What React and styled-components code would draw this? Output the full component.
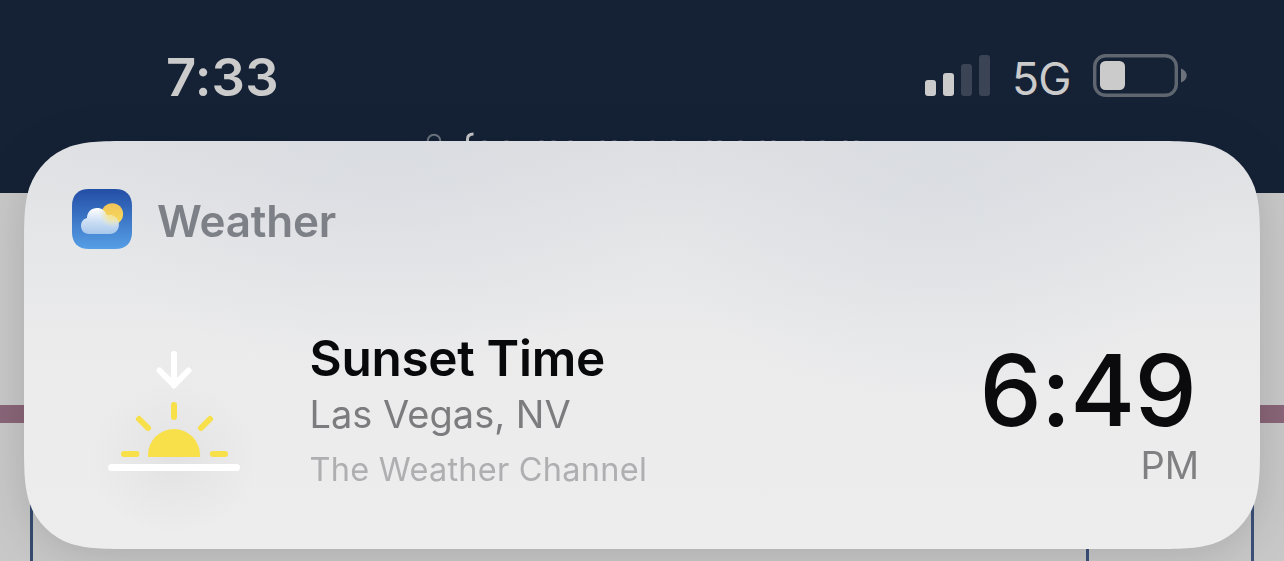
import React from 'react';
import styled, { createGlobalStyle } from "styled-components";

const GlobalStyle = createGlobalStyle`
  body {
    margin: 0;
    background: #c8c8c8;
    font-family: Inter, "Liberation Sans", sans-serif;
    overflow: hidden;
  }
`;

const CARD_SHAPE = "M111.6 0 H1124.4 C1156.5 0 1172.6 0 1189.9 5.5 C1208.8 12.3 1223.7 27.2 1230.5 46.1 C1236 63.4 1236 79.5 1236 111.6 V296.4 C1236 328.5 1236 344.6 1230.5 361.9 C1223.7 380.8 1208.8 395.7 1189.9 402.5 C1172.6 408 1156.5 408 1124.4 408 H111.6 C79.5 408 63.4 408 46.1 402.5 C27.2 395.7 12.3 380.8 5.5 361.9 C0 344.6 0 328.5 0 296.4 V111.6 C0 79.5 0 63.4 5.5 46.1 C12.3 27.2 27.2 12.3 46.1 5.5 C63.4 0 79.5 0 111.6 0 Z";

const letterTops = [484, 506, 541, 553, 570, 602, 614, 631, 652, 673, 709, 719, 740, 762, 773, 802, 822, 845, 856];

const SignalIcon = () => (
  <svg width="66" height="42" viewBox="0 0 66 42">
    <rect x="0" y="25" width="11" height="16" rx="3" fill="#cbcbcb" />
    <rect x="18" y="18" width="11" height="23" rx="3" fill="#cbcbcb" />
    <rect x="36" y="9" width="11" height="32" rx="3" fill="#3b4454" />
    <rect x="54" y="0" width="11" height="41" rx="3" fill="#3b4454" />
  </svg>
);

const BatteryIcon = () => (
  <svg width="95" height="44" viewBox="0 0 95 44">
    <rect x="1.7" y="1.7" width="81.6" height="39.6" rx="11" fill="none" stroke="#5f6670" strokeWidth="3.4" />
    <rect x="7" y="7" width="25" height="29" rx="5.5" fill="#cbcbcb" />
    <path d="M88 14.5 C91.5 15.8 93.7 18.3 93.7 21.5 C93.7 24.7 91.5 27.2 88 28.5 Z" fill="#6c727c" />
  </svg>
);

const WeatherIcon = () => (
  <svg width="60" height="60" viewBox="0 0 60 60">
    <defs>
      <linearGradient id="sky" x1="0" y1="0" x2="0" y2="1">
        <stop offset="0" stopColor="#234ea6" />
        <stop offset="1" stopColor="#569fe6" />
      </linearGradient>
      <linearGradient id="sun" x1="0" y1="0" x2="0" y2="1">
        <stop offset="0" stopColor="#f2c35a" />
        <stop offset="1" stopColor="#f6df5c" />
      </linearGradient>
      <linearGradient id="cloud" x1="0" y1="19" x2="0" y2="45" gradientUnits="userSpaceOnUse">
        <stop offset="0" stopColor="#ffffff" />
        <stop offset="0.55" stopColor="#c9dcf3" />
        <stop offset="1" stopColor="#a8c8ec" />
      </linearGradient>
      <radialGradient id="glow" cx="40.5" cy="25" r="14" gradientUnits="userSpaceOnUse">
        <stop offset="0" stopColor="#f5e27a" />
        <stop offset="0.45" stopColor="#f3e6a0" stopOpacity="0.85" />
        <stop offset="1" stopColor="#dfe8e4" stopOpacity="0" />
      </radialGradient>
      <path id="cloudShape" d="M17 45 C12.3 45 9 41.4 9 37 C9 32.8 11.5 29.8 15 29 C15 23 19.5 19 25 19 C29.8 19 33 21.6 34.8 26.3 C41.4 24.8 46.8 30 46.9 35.5 C47 41 43 45 38 45 Z" />
    </defs>
    <path d="M17 0 H43 C54 0 60 6 60 17 V43 C60 54 54 60 43 60 H17 C6 60 0 54 0 43 V17 C0 6 6 0 17 0 Z" fill="url(#sky)" />
    <circle cx="40.3" cy="25" r="10.8" fill="url(#sun)" />
    <use href="#cloudShape" fill="url(#cloud)" />
    <use href="#cloudShape" fill="url(#glow)" />
  </svg>
);

const SunsetIcon = () => (
  <svg width="132" height="122" viewBox="0 0 132 122">
    <g fill="none" stroke="#ffffff" strokeWidth="6" strokeLinecap="round">
      <path d="M66 3 V34" />
      <path d="M51.5 19.5 L66 34 L80.5 19.5" strokeLinejoin="miter" />
      <path d="M3.5 116.5 H128.5" strokeWidth="7" />
    </g>
    <path d="M40 106 V104 A26 26 0 0 1 92 104 V106 Z" fill="#f8e04b" />
    <g stroke="#f8e04b" strokeWidth="6" strokeLinecap="round">
      <path d="M66 54 V66" />
      <path d="M31 68 L40 77" />
      <path d="M102 68 L93 77" />
      <path d="M16 103 H28.5" />
      <path d="M104.8 103 H117" />
    </g>
  </svg>
);

const App = () => {
  return (
    <Screen>
      <GlobalStyle />
      <TopBar>
        <Clock>7:33</Clock>
        <StatusIcons>
          <SignalIcon />
          <Network>5G</Network>
          <BatteryIcon />
        </StatusIcons>
      </TopBar>
      <Content>
        <Stripe />
        <TableRow>
          <Cell />
          <Cell />
        </TableRow>
      </Content>
      <AddressLine width="1284" height="16" viewBox="0 125 1284 16">
        <circle cx="434" cy="141" r="6.3" fill="none" stroke="#6d7581" strokeWidth="2" />
        <path d="M467.5 142 V139 Q467.5 134 473.5 134" fill="none" stroke="#c6c7c9" strokeWidth="3" />
        {letterTops.map((x) => (
          <rect key={x} x={x - 1.5} y="140" width="4" height="1" fill="#465060" />
        ))}
      </AddressLine>
      <Shadow>
        <Card>
          <Header>
            <WeatherIcon />
            <AppName>Weather</AppName>
          </Header>
          <Body>
            <IconBox>
              <SunsetIcon />
            </IconBox>
            <Details>
              <Title>Sunset Time</Title>
              <Place>Las Vegas, NV</Place>
              <Source>The Weather Channel</Source>
            </Details>
            <TimeBox>
              <Time>6:49</Time>
              <Period>PM</Period>
            </TimeBox>
          </Body>
        </Card>
      </Shadow>
    </Screen>
  );
};

export default App;

const Screen = styled.div`
  position: relative;
  width: 1284px;
  height: 561px;
  overflow: hidden;
  background: #c8c8c8;
`;

const TopBar = styled.div`
  height: 193px;
  box-sizing: border-box;
  padding: 47px 96px 0 166px;
  display: flex;
  justify-content: space-between;
  align-items: flex-start;
  background: #152236;
  color: #cbcbcb;
`;

const Clock = styled.div`
  font-size: 52.5px;
  line-height: 60px;
  font-weight: 600;
  letter-spacing: 0.2px;
`;

const StatusIcons = styled.div`
  display: flex;
  align-items: center;
  height: 58px;
`;

const Network = styled.div`
  width: 58px;
  margin: 5px 23px 0 21px;
  font-size: 44.5px;
  line-height: 58px;
  font-weight: 400;
  letter-spacing: -0.8px;
`;

const Content = styled.div`
  padding-top: 212px;
`;

const Stripe = styled.div`
  height: 18px;
  background: #896578;
`;

const TableRow = styled.div`
  display: grid;
  grid-template-columns: 1056px 165px;
  height: 138px;
  margin-left: 30px;
  border-left: 3px solid #364b70;
`;

const Cell = styled.div`
  border-right: 3px solid #3b507a;
`;

const AddressLine = styled.svg`
  position: absolute;
  left: 0;
  top: 125px;
`;

const Shadow = styled.div`
  position: absolute;
  left: 24px;
  top: 141px;
  filter: drop-shadow(0 6px 22px rgba(0, 0, 0, 0.14));
`;

const Card = styled.div`
  width: 1236px;
  height: 408px;
  box-sizing: border-box;
  padding: 48px 61px 0 48px;
  clip-path: path("${CARD_SHAPE}");
  background:
    radial-gradient(ellipse 85px 75px at 150px 318px, rgba(90, 90, 95, 0.07), rgba(90, 90, 95, 0.03) 50%, transparent),
    radial-gradient(ellipse 340px 230px at 360px 0, rgba(213, 217, 223, 0.6), transparent),
    radial-gradient(ellipse 300px 230px at 910px 30px, rgba(213, 217, 223, 0.6), transparent),
    linear-gradient(#dfe0e3 0, #e5e6e8 22%, #ebebec 48%, #ededee 100%);
`;

const Header = styled.div`
  display: flex;
  align-items: center;
  gap: 25px;
  height: 60px;
`;

const AppName = styled.div`
  font-size: 44px;
  line-height: 60px;
  padding-top: 4px;
  font-weight: 600;
  letter-spacing: -0.2px;
  color: #7d8086;
`;

const Body = styled.div`
  display: flex;
  padding: 79px 0 0 36px;
`;

const IconBox = styled.div`
  width: 201.5px;
  padding-top: 23px;
`;

const Details = styled.div`
  flex: 1;
  white-space: nowrap;
`;

const Title = styled.div`
  font-size: 49.5px;
  line-height: 60px;
  font-weight: 600;
  letter-spacing: -0.3px;
  color: #08090b;
`;

const Place = styled.div`
  font-size: 38px;
  line-height: 53px;
  color: #7c7c7e;
`;

const Source = styled.div`
  font-size: 32.5px;
  line-height: 57px;
  letter-spacing: 0.25px;
  color: #afafb1;
`;

const TimeBox = styled.div`
  padding-top: 7px;
  text-align: right;
`;

const Time = styled.div`
  padding-right: 3px;
  font-size: 99px;
  line-height: 110px;
  font-weight: 500;
  letter-spacing: -0.8px;
  color: #0b0b0d;
`;

const Period = styled.div`
  font-size: 38px;
  line-height: 40px;
  color: #808082;
`;
